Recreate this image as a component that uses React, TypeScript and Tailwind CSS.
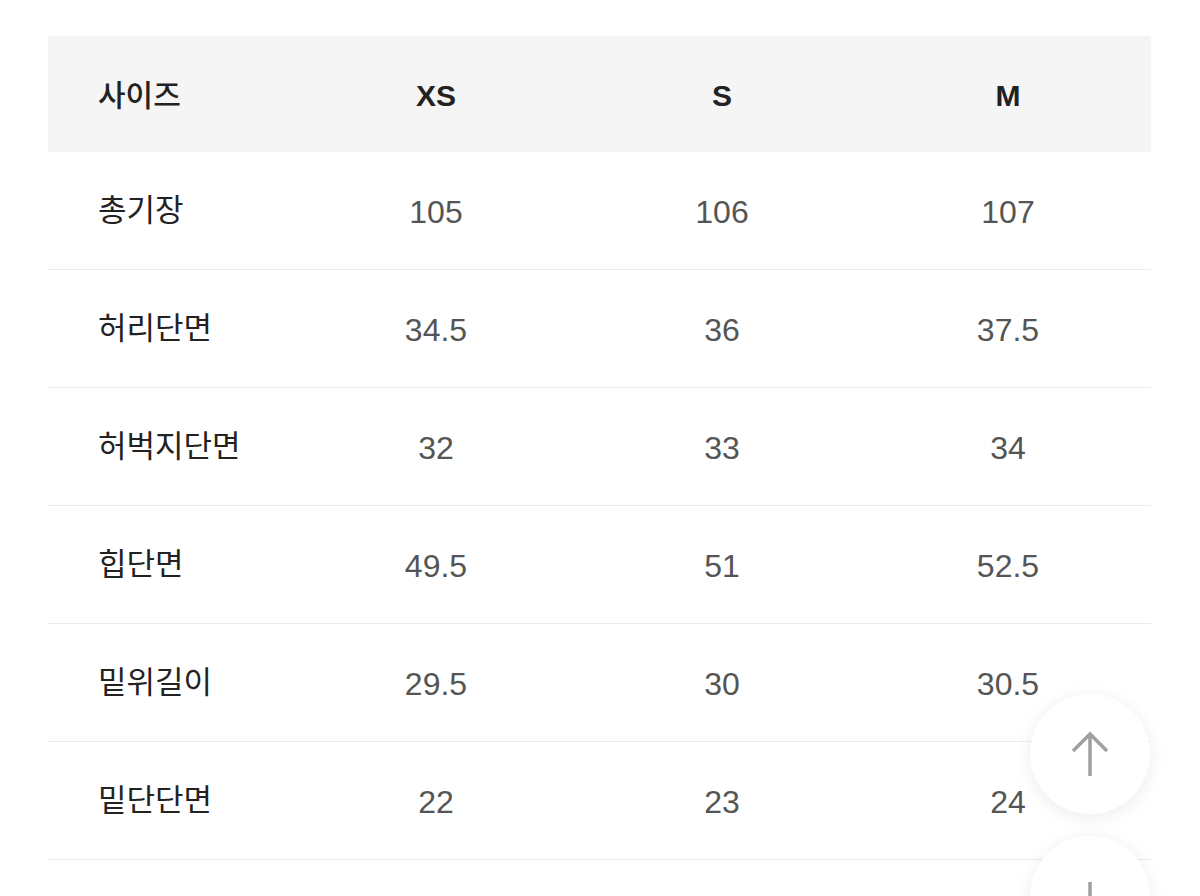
const sizes = ["XS", "S", "M"];

const rows = [
    { label: "총기장", values: ["105", "106", "107"] },
    { label: "허리단면", values: ["34.5", "36", "37.5"] },
    { label: "허벅지단면", values: ["32", "33", "34"] },
    { label: "힙단면", values: ["49.5", "51", "52.5"] },
    { label: "밑위길이", values: ["29.5", "30", "30.5"] },
    { label: "밑단단면", values: ["22", "23", "24"] },
];

const font = { fontFamily: '"Liberation Sans", "Noto Sans CJK KR", sans-serif' };

const App = () => {
    return (
        <div className="relative h-[896px] w-[1200px] overflow-hidden bg-white" style={font}>
            <div className="pl-[48px] pt-[36px]">
                <div className="w-[1103px]">
                    <div className="grid h-[116px] grid-cols-[245px_1fr_1fr_1fr] items-center bg-[#f5f5f5] text-[#222]">
                        <div className="pl-[50px] pt-[2px] text-[30px] font-medium">사이즈</div>
                        {sizes.map((s) => (
                            <div key={s} className="pt-[2px] text-center text-[30px] font-bold">{s}</div>
                        ))}
                    </div>
                    {rows.map((row, key) => (
                        <div key={key} className="grid h-[118px] grid-cols-[245px_1fr_1fr_1fr] items-center border-b border-[#ececec]">
                            <div className="pl-[50px] pt-[2px] text-[31px] text-[#222]">{row.label}</div>
                            {row.values.map((v, i) => (
                                <div key={i} className="pt-[2px] text-center text-[32px] text-[#555]">{v}</div>
                            ))}
                        </div>
                    ))}
                </div>
            </div>

            {/* 위로/아래로 이동 버튼 */}
            <button className="absolute left-[1030px] top-[694px] h-[120px] w-[120px] rounded-full bg-white shadow-[0_3px_18px_rgba(0,0,0,0.08)]">
                <svg width="120" height="120" viewBox="0 0 120 120" fill="none" stroke="#a0a0a0" strokeWidth="3.5" strokeLinecap="butt" strokeLinejoin="miter">
                    <path d="M60 40 V82" />
                    <path d="M43 57 L60 40 L77 57" />
                </svg>
            </button>
            <button className="absolute left-[1030px] top-[836px] h-[120px] w-[120px] rounded-full bg-white shadow-[0_3px_18px_rgba(0,0,0,0.08)]">
                <svg width="120" height="120" viewBox="0 0 120 120" fill="none" stroke="#a0a0a0" strokeWidth="3.5" strokeLinecap="butt" strokeLinejoin="miter">
                    <path d="M60 46 V88" />
                    <path d="M43 71 L60 88 L77 71" />
                </svg>
            </button>
        </div>
    );
};

export default App;
